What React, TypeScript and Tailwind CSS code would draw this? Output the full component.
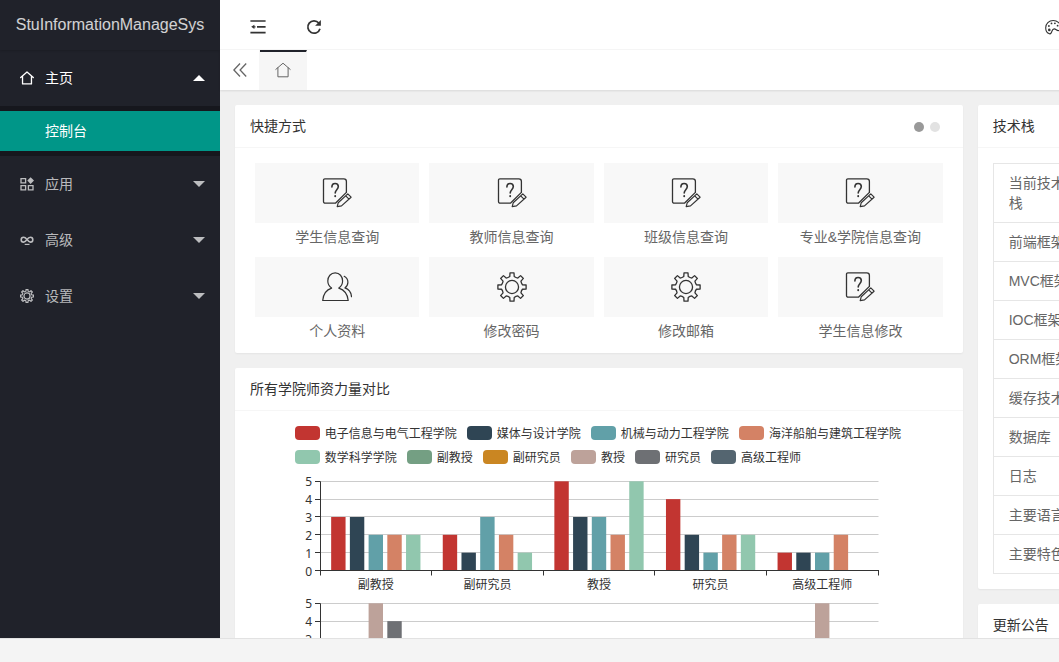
import React from "react";

const FONT = "font-['Liberation_Sans','Noto_Sans_CJK_SC',sans-serif]";

function HomeIcon({ className, width }: { className: string; width: number }) {
  return (
    <svg viewBox="0 0 16 16" className={className} fill="none" stroke="currentColor" strokeWidth={width} strokeLinejoin="round" strokeLinecap="round">
      <path d="M.8 7.400 8 1.200l7.200 6.200M2.900 5.800v9h10.200v-9" />
    </svg>
  );
}

function AppIcon() {
  return (
    <svg viewBox="0 0 14 14" className="size-3.5" fill="none" stroke="currentColor" strokeWidth="1.3">
      <path d="M1 1.6h4.6v4.2H1zM1 8.6h4.6v4.2H1zM8.4 8.6H13v4.2H8.4z" />
      <path d="M10.6.2 14 3.6 10.6 7 7.3 3.6z" fill="currentColor" stroke="none" />
    </svg>
  );
}

function SeniorIcon() {
  return (
    <svg viewBox="0 0 14 14" className="size-3.5" fill="none" stroke="currentColor" strokeWidth="1.6">
      <path d="M7 6.5C5.9 5.2 4.9 4.3 3.6 4.3a2.4 2.4 0 0 0 0 4.8C5 9.1 5.9 8 7 6.5s2-2.2 3.4-2.2a2.4 2.4 0 0 1 0 4.8C9.1 9.1 8.1 7.9 7 6.5z" />
      <path d="M4.7 11.4h4.8" strokeWidth="1.2" />
    </svg>
  );
}

const polar = (r: number, deg: number) => {
  const a = (deg * Math.PI) / 180;
  return `${(16 + r * Math.sin(a)).toFixed(2)} ${(16 - r * Math.cos(a)).toFixed(2)}`;
};

const GEAR_PATH =
  Array.from({ length: 8 }, (_, i) => {
    const a = i * 45;
    return `${i ? "L" : "M"}${polar(11.4, a - 12)}L${polar(15.2, a - 8)}L${polar(15.2, a + 8)}L${polar(11.4, a + 12)}Q${polar(10.6, a + 22.5)} ${polar(11.4, a + 33)}`;
  }).join("") + "z";

function GearIcon({ className, width }: { className: string; width: number }) {
  return (
    <svg viewBox="0 0 32 32" className={className} fill="none" stroke="currentColor" strokeWidth={width} strokeLinejoin="round">
      <circle cx="16" cy="16" r="7" />
      <path d={GEAR_PATH} />
    </svg>
  );
}

function SurveyIcon() {
  return (
    <svg viewBox="0 0 30 30" className="size-[30px]" fill="none" stroke="currentColor" strokeWidth="1.3" strokeLinejoin="round" strokeLinecap="round">
      <path d="M24.4 14.400V3.400C24.400 1.800 23.400.8 21.800.8H2.800A1.300 1.300 0 0 0 1.500 2.100v21.400A1.700 1.700 0 0 0 3.200 25.200h10.200L24.400 14.400" />
      <path d="m15.200 28.700 1-3.900 9.600-8.900 3.300 3.300-9.600 8.700zM23.700 17.900l3.300 3.300" strokeWidth="1.200" />
      <path d="M9.900 9c0-2.200 1.300-3.500 3.200-3.500s3.200 1.300 3.200 3.100c0 2.900-3.100 3.300-3.100 6.300" strokeWidth="1.600" />
      <path d="M13.200 18v.3" strokeWidth="1.900" />
    </svg>
  );
}

function UserIcon() {
  return (
    <svg viewBox="0 0 30 30" className="size-[30px]" fill="none" stroke="currentColor" strokeWidth="1.2" strokeLinejoin="round" strokeLinecap="round">
      <path d="M9.6 16.1C7.2 14.5 5.800 12.100 5.800 9.100c0-4.700 3-8.200 7.400-8.200s7.400 3.500 7.400 8.200c0 3-1.400 5.400-3.800 7 5.400 1.700 8.800 5.700 9.400 12.400H.700c.6-6.700 3.500-10.700 8.900-12.400z" />
      <path d="M22.200 4.300c2.400 1.400 3.700 3.200 3.700 6 0 2.400-.9 4.200-3 5.600 4 1.400 6.300 4.300 6.600 8.800" />
    </svg>
  );
}

function PaletteIcon() {
  return (
    <svg viewBox="0 0 16 16" className="size-4 shrink-0" fill="none" stroke="currentColor" strokeWidth="1.1" strokeLinejoin="round">
      <path d="M3.9 14.6C1.7 13.7.7 11.3.7 8.7.7 4.6 3.9 1.5 8.2 1.5c4.2 0 7.2 2.8 7.2 6.2 0 2.3-.9 3.9-2.2 3.9-1.6 0-2.3-1.7-4-1.7-2.2 0-2 2.4-3 4-.5.8-1.4 1.1-2.3.7z" />
      <g fill="currentColor" stroke="none">
        <circle cx="4.3" cy="10.9" r="1.3" />
        <circle cx="3.9" cy="7" r=".9" />
        <circle cx="6.5" cy="4.4" r=".9" />
        <circle cx="9.9" cy="4.3" r=".9" />
        <circle cx="12.6" cy="6.7" r=".9" />
      </g>
    </svg>
  );
}

const menu = [
  { label: "应用", icon: <AppIcon /> },
  { label: "高级", icon: <SeniorIcon /> },
  { label: "设置", icon: <GearIcon className="size-3.5" width={2.8} /> },
];

function Sidebar() {
  return (
    <aside className="flex w-[220px] shrink-0 flex-col bg-[#20222a] text-sm text-white/70">
      <div className="flex h-[50px] shrink-0 items-center justify-center text-base text-white/80 shadow-[0_1px_2px_0_rgba(0,0,0,0.15)]">
        StuInformationManageSys
      </div>
      <nav aria-label="主菜单">
        <button type="button" aria-expanded="true" className="flex h-14 w-full items-center px-5 text-white">
          <HomeIcon className="size-3.5" width={1.5} />
          <span className="ml-[11px]">主页</span>
          <svg viewBox="0 0 12 6" className="-mr-[5px] ml-auto h-1.5 w-3" fill="currentColor">
            <path d="M0 6 6 0l6 6z" />
          </svg>
        </button>
        <div className="bg-black/30 py-[5px]">
          <a href="#console" className="flex h-10 items-center bg-[#009688] pl-[45px] text-white">
            控制台
          </a>
        </div>
        {menu.map((m) => (
          <button key={m.label} type="button" aria-expanded="false" className="flex h-14 w-full items-center px-5">
            {m.icon}
            <span className="ml-[11px]">{m.label}</span>
            <svg viewBox="0 0 12 6" className="-mr-[5px] ml-auto h-1.5 w-3" fill="currentColor">
              <path d="M0 0h12L6 6z" />
            </svg>
          </button>
        ))}
      </nav>
    </aside>
  );
}

function Header() {
  return (
    <header className="flex h-[50px] shrink-0 items-center justify-between border-b border-[#f6f6f6] bg-white pt-1 text-[#333]">
      <div className="flex items-center gap-[26px] pl-[23px]">
        <button type="button" aria-label="侧边伸缩" className="flex size-[30px] items-center justify-center">
          <svg viewBox="0 0 16 14" className="h-3.5 w-4" fill="none" stroke="currentColor" strokeWidth="1.7">
            <path d="M.4 1H15.600M7 6.800h8.600M.4 12.700H15.600" />
            <path d="M1.200 6.800 4.400 4.700v4.200zM4 6.200h1.500v1.200H4z" fill="currentColor" stroke="none" />
          </svg>
        </button>
        <button type="button" aria-label="刷新" className="flex size-[30px] items-center justify-center">
          <svg viewBox="0 0 16 16" className="size-4" fill="none" stroke="currentColor" strokeWidth="1.7">
            <path d="M14 9.700A6.200 6.200 0 1 1 12.800 4" />
            <path d="M14.900.9v5.800H9.100z" fill="currentColor" stroke="none" />
          </svg>
        </button>
      </div>
      <div className="flex w-80 items-center px-4">
        <button type="button" aria-label="主题">
          <PaletteIcon />
        </button>
      </div>
    </header>
  );
}

function TabBar() {
  return (
    <div className="relative flex h-10 shrink-0 bg-white text-[#666] shadow-[0_1px_2px_0_rgba(0,0,0,0.1)]">
      <button type="button" aria-label="向左滚动" className="flex w-10 items-center justify-center border-r border-[#f6f6f6]">
        <svg viewBox="0 0 14 14" className="size-3.5" fill="none" stroke="currentColor" strokeWidth="1.3">
          <path d="M7 .5.900 7 7 13.500M13.200.5 7.100 7l6.100 6.500" />
        </svg>
      </button>
      <button
        type="button"
        aria-label="首页"
        className="flex w-[47px] items-center justify-center border-t-2 border-r border-t-[#20222a] border-r-[#f6f6f6] bg-[#f6f6f6] pb-0.5"
      >
        <HomeIcon className="size-4" width={1} />
      </button>
    </div>
  );
}

function Card({ title, extra, children }: { title: string; extra?: React.ReactNode; children?: React.ReactNode }) {
  return (
    <section className="rounded-xs bg-white shadow-[0_1px_2px_0_rgba(0,0,0,0.05)]">
      <div className="flex h-[43px] items-center justify-between border-b border-[#f6f6f6] px-[15px]">
        <h2 className="text-sm text-[#333]">{title}</h2>
        {extra}
      </div>
      {children}
    </section>
  );
}

const shortcuts = [
  { label: "学生信息查询", icon: <SurveyIcon /> },
  { label: "教师信息查询", icon: <SurveyIcon /> },
  { label: "班级信息查询", icon: <SurveyIcon /> },
  { label: "专业&学院信息查询", icon: <SurveyIcon /> },
  { label: "个人资料", icon: <UserIcon /> },
  { label: "修改密码", icon: <GearIcon className="size-[30px]" width={1.4} /> },
  { label: "修改邮箱", icon: <GearIcon className="size-[30px]" width={1.4} /> },
  { label: "学生信息修改", icon: <SurveyIcon /> },
];

function Shortcuts() {
  return (
    <div className="grid grid-cols-4 gap-2.5 px-5 pt-[15px] pb-3">
      {shortcuts.map((s) => (
        <a key={s.label} href="#shortcut" className="text-center text-sm text-[#666]">
          <span className="flex h-[60px] items-center justify-center bg-[#f8f8f8] text-[#333]">{s.icon}</span>
          <span className="block h-6 leading-7">{s.label}</span>
        </a>
      ))}
    </div>
  );
}

const legend: [string, string][] = [
  ["电子信息与电气工程学院", "#c23531"],
  ["媒体与设计学院", "#2f4554"],
  ["机械与动力工程学院", "#61a0a8"],
  ["海洋船舶与建筑工程学院", "#d48265"],
  ["数学科学学院", "#91c7ae"],
  ["副教授", "#749f83"],
  ["副研究员", "#ca8622"],
  ["教授", "#bda29a"],
  ["研究员", "#6e7074"],
  ["高级工程师", "#546570"],
];

const LEFT = 21;
const BAND = 111.6;
const STEP = 17.84;

function Plot({ top, rows, colors, names }: { top: number; rows: number[][]; colors: string[]; names: string[] }) {
  const base = top + STEP * 5;
  const crisp = (v: number) => Math.floor(v) + 0.5;
  return (
    <g>
      {[1, 2, 3, 4, 5].map((v) => (
        <path key={v} d={`M${LEFT} ${crisp(base - v * STEP)}H579.5`} stroke="#ccc" />
      ))}
      {rows.map((row, c) =>
        row.map((v, i) => (
          <rect key={`${c}-${i}`} x={LEFT + c * BAND + 11.16 + i * 18.72} y={base - v * STEP} width="14.4" height={v * STEP} fill={colors[i]} />
        )),
      )}
      <path d={`M21.5 ${top}V${base}M21 ${crisp(base)}H580`} stroke="#333" />
      {[0, 1, 2, 3, 4, 5].map((v) => (
        <g key={v}>
          <path d={`M16 ${crisp(base - v * STEP)}h5`} stroke="#333" />
          <path d={`M${crisp(LEFT + v * BAND)} ${base}v5`} stroke="#333" />
          <text x="13" y={base - v * STEP + 5} textAnchor="end">
            {v}
          </text>
        </g>
      ))}
      {names.map((n, i) => (
        <text key={n} x={LEFT + BAND * (i + 0.5)} y={base + 18} textAnchor="middle">
          {n}
        </text>
      ))}
    </g>
  );
}

function Chart() {
  const colors = legend.map((l) => l[1]);
  return (
    <div className="p-[15px] text-xs text-[#333]">
      <ul className="mx-auto flex max-w-[608px] flex-wrap gap-2.5">
        {legend.map(([name, color]) => (
          <li key={name} className="flex h-3.5 shrink-0 items-center gap-[5px] whitespace-nowrap">
            <span className="h-3.5 w-[25px] rounded" style={{ backgroundColor: color }} />
            <span className="pt-0.5">{name}</span>
          </li>
        ))}
      </ul>
      <svg
        role="img"
        aria-label="所有学院师资力量对比"
        width="600"
        height="240"
        viewBox="0 0 600 240"
        fill="none"
        className="mx-auto mt-2.5 block font-['Noto_Sans','Noto_Sans_CJK_SC',sans-serif] [&_text]:fill-[#333]"
      >
        <Plot
          top={7.3}
          colors={colors.slice(0, 5)}
          names={["副教授", "副研究员", "教授", "研究员", "高级工程师"]}
          rows={[
            [3, 3, 2, 2, 2],
            [2, 1, 3, 2, 1],
            [5, 3, 3, 2, 5],
            [4, 2, 1, 2, 2],
            [1, 1, 1, 2, 0],
          ]}
        />
        <Plot
          top={129.3}
          colors={colors.slice(5)}
          names={[]}
          rows={[
            [0, 0, 5, 4, 0],
            [0, 0, 0, 0, 0],
            [0, 0, 0, 0, 0],
            [0, 0, 0, 0, 0],
            [0, 0, 5, 0, 0],
          ]}
        />
      </svg>
    </div>
  );
}

const stack = ["当前技术栈", "前端框架", "MVC框架", "IOC框架", "ORM框架", "缓存技术", "数据库", "日志", "主要语言", "主要特色"];

function StackTable() {
  return (
    <div className="p-[15px]">
      <table className="w-full table-fixed border-collapse text-sm text-[#666]">
        <tbody>
          {stack.map((name) => (
            <tr key={name}>
              <th scope="row" className="w-[97px] border border-[#e6e6e6] px-[15px] py-[9px] text-left leading-5 font-normal">
                {name}
              </th>
              <td className="border border-[#e6e6e6]" />
            </tr>
          ))}
        </tbody>
      </table>
    </div>
  );
}

export default function App() {
  return (
    <div className={`flex h-screen flex-col overflow-hidden bg-[#f4f4f4] ${FONT}`}>
      <div className="flex min-h-0 flex-1 overflow-hidden">
        <Sidebar />
        <div className="flex min-w-[1129px] flex-1 flex-col">
          <Header />
          <TabBar />
          <main className="grid min-h-0 flex-1 grid-cols-3 items-start gap-[15px] overflow-y-auto bg-[#f0f0f0] p-[15px] [scrollbar-width:none]">
            <div className="col-span-2 flex flex-col gap-[15px]">
              <Card
                title="快捷方式"
                extra={
                  <div className="mr-2 flex gap-1.5 pt-0.5">
                    <button type="button" aria-label="第一页" className="size-2.5 rounded-full bg-[#999]" />
                    <button type="button" aria-label="第二页" className="size-2.5 rounded-full bg-[#e2e2e2]" />
                  </div>
                }
              >
                <Shortcuts />
              </Card>
              <Card title="所有学院师资力量对比">
                <Chart />
              </Card>
            </div>
            <div className="flex flex-col gap-[15px]">
              <Card title="技术栈">
                <StackTable />
              </Card>
              <Card title="更新公告" />
            </div>
          </main>
        </div>
      </div>
      <footer className="h-6 shrink-0 border-t border-[#e2e2e2] bg-[#f4f4f4]" />
    </div>
  );
}
